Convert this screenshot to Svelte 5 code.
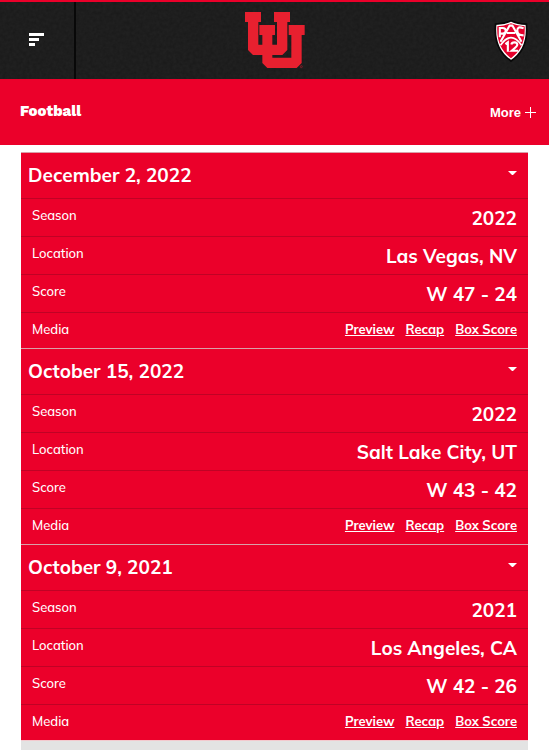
<script>
	const games = [
		{ date: 'December 2, 2022', season: '2022', location: 'Las Vegas, NV', score: 'W 47 - 24' },
		{ date: 'October 15, 2022', season: '2022', location: 'Salt Lake City, UT', score: 'W 43 - 42' },
		{ date: 'October 9, 2021', season: '2021', location: 'Los Angeles, CA', score: 'W 42 - 26' }
	];
	const links = ['Preview', 'Recap', 'Box Score'];

	let open = $state([true, true, true]);
</script>

<header>
	<svg class="texture" aria-hidden="true">
		<filter id="grain">
			<feTurbulence type="fractalNoise" baseFrequency="0.3" numOctaves="2" />
			<feColorMatrix values="0 0 0 0 0  0 0 0 0 0  0 0 0 0 0  1 0 0 0 -0.3" />
		</filter>
		<rect width="100%" height="100%" filter="url(#grain)" />
	</svg>
	<button class="menu" aria-label="Menu">
		<svg width="15" height="14" viewBox="0 0 15 14" fill="#fff">
			<path d="M0 0h15v3H0zM0 5h10v3H0zM0 10h6v3H0z" />
		</svg>
	</button>
	<a class="logo" href="#home" aria-label="Utah">
		<svg width="60" height="57" viewBox="0 0 180 171">
			<path
				d="M0 0h48v30h-8v68h12V69h-9V39h47v30h-8v29h14V30h-9V0h48v30h-8v84l-15 15H82v8h57V69h-8V39h48v30h-9v84l-15 15H67l-15-15v-24H24L9 114V30H0z"
				fill="#e8202f"
			/>
			<circle cx="169" cy="164" r="3" fill="none" stroke="#a51b28" stroke-width="2" />
		</svg>
	</a>
	<a class="conference" href="#conference" aria-label="Pac-12">
		<svg width="34" height="42" viewBox="0 0 96 120">
			<path d="M48 2Q66 11 92 12Q99 83 48 117Q-3 83 4 12Q30 11 48 2z" fill="#fff" stroke="#080808" stroke-width="5" />
			<path d="M48 9Q67 17 87 18Q91 78 48 109Q5 78 9 18Q29 17 48 9z" fill="#e4002b" />
			<g fill="none" stroke="#fff">
				<path d="M16 49V23h8q9 0 9 8t-9 8h-7M18 62L44 16h8l26 46M36 37h24M84 24Q66 16 66 30t18 14" stroke-width="6" />
				<path d="M18 72Q48 29 78 72" stroke-width="5" />
				<path d="M32 69l7-5v27M49 70q1-6 9-6t8 7q0 4-16 17h18" stroke-width="6" />
			</g>
		</svg>
	</a>
</header>

<nav>
	<a class="sport" href="#football">Football</a>
	<button class="more">
		More
		<svg width="11" height="11" viewBox="0 0 11 11" fill="#fff">
			<path d="M5 0h1v11H5zM0 5h11v1H0z" />
		</svg>
	</button>
</nav>

<main>
	{#each games as game, i}
		<section>
			<button class="date" aria-expanded={open[i]} onclick={() => (open[i] = !open[i])}>
				{game.date}
				<svg width="9" height="5" viewBox="0 0 9 5" fill="#fff"><path d="M0 0h9L5 4H4z" /></svg>
			</button>
			{#if open[i]}
				<table>
					<tbody>
						<tr><th scope="row">Season</th><td>{game.season}</td></tr>
						<tr><th scope="row">Location</th><td>{game.location}</td></tr>
						<tr><th scope="row">Score</th><td>{game.score}</td></tr>
						<tr class="media">
							<th scope="row">Media</th>
							<td>
								<div class="links">
									{#each links as link}
										<a href="#media">{link}</a>
									{/each}
								</div>
							</td>
						</tr>
					</tbody>
				</table>
			{/if}
		</section>
	{/each}
	<div class="next"></div>
</main>

<style>
	:global(body) {
		margin: 0;
		background: #fff;
		font-family: Muli, Mulish, 'Open Sans', sans-serif;
	}

	button {
		border: 0;
		padding: 0;
		background: none;
		color: #fff;
		font: inherit;
		cursor: pointer;
	}

	a {
		color: #fff;
	}

	svg {
		display: block;
	}

	header {
		position: relative;
		display: grid;
		grid-template-columns: 76px 1fr 76px;
		height: 77px;
		border-top: 2px solid #eb002a;
		background: #202020;
	}

	.texture {
		position: absolute;
		inset: 0;
		width: 100%;
		height: 100%;
		opacity: 0.3;
	}

	.menu,
	.logo,
	.conference {
		position: relative;
		display: flex;
		align-items: center;
		justify-content: center;
	}

	.menu {
		padding: 0 2px 2px 0;
		border-right: 2px solid #080808;
	}

	nav {
		display: flex;
		align-items: center;
		justify-content: space-between;
		height: 66px;
		padding: 0 13px 0 20px;
		background: #eb002a;
	}

	.sport {
		padding-bottom: 2px;
		font: 800 15px 'Work Sans', Inter, sans-serif;
		text-decoration: none;
	}

	.more {
		display: flex;
		align-items: center;
		gap: 4px;
		font: 700 13px 'Liberation Sans', Arial, sans-serif;
	}

	main {
		margin: 7px 21px 0;
	}

	section {
		border-top: 1px solid #d9a0a8;
		background: #eb002a;
		color: #fff;
	}

	.date {
		display: flex;
		justify-content: space-between;
		align-items: center;
		width: 100%;
		height: 45px;
		padding: 0 11px 2px 7px;
		font-size: 19px;
		font-weight: 700;
	}

	.date svg {
		margin-bottom: 3px;
	}

	table {
		width: 100%;
		border-spacing: 0;
	}

	th,
	td {
		box-sizing: border-box;
		height: 38px;
		padding: 0 11px;
		border-top: 1px solid #c00225;
		line-height: 24px;
	}

	th {
		padding-bottom: 5px;
		font-size: 13px;
		font-weight: 500;
		text-align: left;
	}

	td {
		font-size: 19px;
		font-weight: 700;
		text-align: right;
	}

	.media th,
	.media td {
		height: 36px;
		padding-bottom: 3px;
	}

	.links {
		display: flex;
		justify-content: flex-end;
		gap: 11px;
		font-size: 13px;
	}

	.next {
		height: 9px;
		border-top: 1px solid #f3c9ce;
		background: #e3e3e3;
	}
</style>
